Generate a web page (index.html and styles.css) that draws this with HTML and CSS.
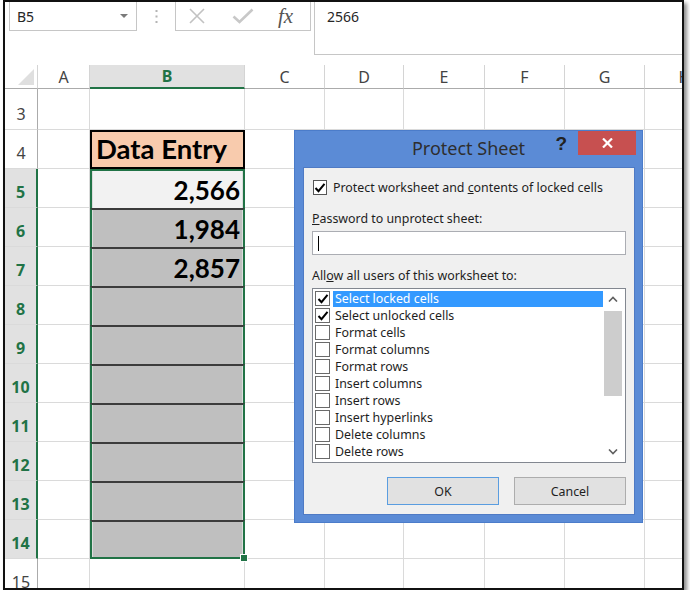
FILE: index.html
```html
<!DOCTYPE html>
<html lang="en">
<head>
    <meta charset="UTF-8">
    <title>Protect Sheet</title>
    <link rel="stylesheet" href="styles.css">
</head>
<body>
    <div class="frame">
        <div class="formula-bar">
            <div class="name-box">
                <span>B5</span>
                <svg class="dropdown" width="8" height="4" viewBox="0 0 8 4"><path d="M0 0h8L4 4z" fill="#7a7a7a"/></svg>
            </div>
            <div class="grip">
                <svg width="3" height="15" viewBox="0 0 3 15"><rect x="0.5" y="1" width="2" height="2" fill="#b4b4b4"/><rect x="0.5" y="6.5" width="2" height="2" fill="#b4b4b4"/><rect x="0.5" y="12" width="2" height="2" fill="#b4b4b4"/></svg>
            </div>
            <div class="fx-buttons">
                <svg width="18" height="16" viewBox="0 0 18 16"><path d="M2 1l14 14M16 1L2 15" stroke="#c2c2c2" stroke-width="1.6" fill="none"/></svg>
                <svg width="22" height="16" viewBox="0 0 22 16"><path d="M1.5 8.5l6 5.5L20.5 1.5" stroke="#c8c8c8" stroke-width="2.6" fill="none"/></svg>
                <span class="fx">fx</span>
            </div>
            <div class="formula-input">2566</div>
        </div>

        <div class="sheet">
            <div class="corner"><svg width="16" height="16" viewBox="0 0 16 16"><path d="M16 0v16H0z" fill="#dfdfdf"/></svg></div>
            <div class="ch">A</div>
            <div class="ch active">B</div>
            <div class="ch">C</div>
            <div class="ch">D</div>
            <div class="ch">E</div>
            <div class="ch">F</div>
            <div class="ch">G</div>
            <div class="ch">H</div>

            <div class="rh">3</div><div class="cell"></div><div class="cell"></div><div class="cell"></div><div class="cell"></div><div class="cell"></div><div class="cell"></div><div class="cell"></div><div class="cell"></div>
            <div class="rh">4</div><div class="cell"></div><div class="cell title">Data Entry</div><div class="cell"></div><div class="cell"></div><div class="cell"></div><div class="cell"></div><div class="cell"></div><div class="cell"></div>
            <div class="rh sel">5</div><div class="cell"></div><div class="cell b first">2,566</div><div class="cell"></div><div class="cell"></div><div class="cell"></div><div class="cell"></div><div class="cell"></div><div class="cell"></div>
            <div class="rh sel">6</div><div class="cell"></div><div class="cell b locked">1,984</div><div class="cell"></div><div class="cell"></div><div class="cell"></div><div class="cell"></div><div class="cell"></div><div class="cell"></div>
            <div class="rh sel">7</div><div class="cell"></div><div class="cell b locked">2,857</div><div class="cell"></div><div class="cell"></div><div class="cell"></div><div class="cell"></div><div class="cell"></div><div class="cell"></div>
            <div class="rh sel">8</div><div class="cell"></div><div class="cell b locked"></div><div class="cell"></div><div class="cell"></div><div class="cell"></div><div class="cell"></div><div class="cell"></div><div class="cell"></div>
            <div class="rh sel">9</div><div class="cell"></div><div class="cell b locked"></div><div class="cell"></div><div class="cell"></div><div class="cell"></div><div class="cell"></div><div class="cell"></div><div class="cell"></div>
            <div class="rh sel">10</div><div class="cell"></div><div class="cell b locked"></div><div class="cell"></div><div class="cell"></div><div class="cell"></div><div class="cell"></div><div class="cell"></div><div class="cell"></div>
            <div class="rh sel">11</div><div class="cell"></div><div class="cell b locked"></div><div class="cell"></div><div class="cell"></div><div class="cell"></div><div class="cell"></div><div class="cell"></div><div class="cell"></div>
            <div class="rh sel">12</div><div class="cell"></div><div class="cell b locked"></div><div class="cell"></div><div class="cell"></div><div class="cell"></div><div class="cell"></div><div class="cell"></div><div class="cell"></div>
            <div class="rh sel">13</div><div class="cell"></div><div class="cell b locked"></div><div class="cell"></div><div class="cell"></div><div class="cell"></div><div class="cell"></div><div class="cell"></div><div class="cell"></div>
            <div class="rh sel">14</div><div class="cell"></div><div class="cell b locked last"><span class="fill-handle"></span></div><div class="cell"></div><div class="cell"></div><div class="cell"></div><div class="cell"></div><div class="cell"></div><div class="cell"></div>
            <div class="rh">15</div><div class="cell"></div><div class="cell"></div><div class="cell"></div><div class="cell"></div><div class="cell"></div><div class="cell"></div><div class="cell"></div><div class="cell"></div>
        </div>

        <div class="dialog">
            <div class="dialog-title">
                <span></span>
                <span class="title-text">Protect Sheet</span>
                <div class="title-buttons">
                    <span class="help">?</span>
                    <span class="close"><svg width="11" height="10" viewBox="0 0 11 10"><path d="M1 0.5l9 9M10 0.5l-9 9" stroke="#fff" stroke-width="2.2" fill="none"/></svg></span>
                </div>
            </div>
            <div class="dialog-body">
                <div class="check-row">
                    <span class="box"><svg width="12" height="12" viewBox="0 0 12 12"><path d="M1.5 6l3 3.2L10.5 1.8" stroke="#000" stroke-width="2" fill="none"/></svg></span>
                    <span>Protect worksheet and <u>c</u>ontents of locked cells</span>
                </div>
                <div class="label"><u>P</u>assword to unprotect sheet:</div>
                <div class="password"><span class="caret"></span></div>
                <div class="label allow">All<u>o</u>w all users of this worksheet to:</div>
                <div class="listbox">
                    <div class="items">
                        <div class="item selected"><span class="box"><svg width="12" height="12" viewBox="0 0 12 12"><path d="M1.5 6l3 3.2L10.5 1.8" stroke="#000" stroke-width="2" fill="none"/></svg></span><span class="text">Select locked cells</span></div>
                        <div class="item"><span class="box"><svg width="12" height="12" viewBox="0 0 12 12"><path d="M1.5 6l3 3.2L10.5 1.8" stroke="#000" stroke-width="2" fill="none"/></svg></span><span class="text">Select unlocked cells</span></div>
                        <div class="item"><span class="box"></span><span class="text">Format cells</span></div>
                        <div class="item"><span class="box"></span><span class="text">Format columns</span></div>
                        <div class="item"><span class="box"></span><span class="text">Format rows</span></div>
                        <div class="item"><span class="box"></span><span class="text">Insert columns</span></div>
                        <div class="item"><span class="box"></span><span class="text">Insert rows</span></div>
                        <div class="item"><span class="box"></span><span class="text">Insert hyperlinks</span></div>
                        <div class="item"><span class="box"></span><span class="text">Delete columns</span></div>
                        <div class="item"><span class="box"></span><span class="text">Delete rows</span></div>
                    </div>
                    <div class="scrollbar">
                        <div class="arrow"><svg width="10" height="6" viewBox="0 0 10 6"><path d="M1 5.5L5 1.5l4 4" stroke="#606060" stroke-width="1.6" fill="none"/></svg></div>
                        <div class="track"><div class="thumb"></div></div>
                        <div class="arrow"><svg width="10" height="6" viewBox="0 0 10 6"><path d="M1 0.5l4 4 4-4" stroke="#606060" stroke-width="1.6" fill="none"/></svg></div>
                    </div>
                </div>
                <div class="buttons">
                    <button type="button" class="btn default">OK</button>
                    <button type="button" class="btn">Cancel</button>
                </div>
            </div>
        </div>
    </div>
</body>
</html>
```

FILE: styles.css
```css
body {
    margin: 0;
    background: #fff;
    font-family: "Noto Sans", "Open Sans", sans-serif;
}
.frame {
    position: relative;
    width: 677px;
    height: 586px;
    margin-left: 3px;
    border: 2px solid #111;
    box-shadow: 3px 3px 4px rgba(0, 0, 0, 0.45);
    overflow: hidden;
    background: #fff;
}

/* formula bar */
.formula-bar {
    display: flex;
    align-items: flex-start;
    height: 53px;
}
.name-box {
    box-sizing: border-box;
    display: flex;
    align-items: center;
    justify-content: space-between;
    width: 128px;
    height: 29px;
    margin-left: 4px;
    padding: 0 8px 0 7px;
    border: 1px solid #c6c6c6;
    border-top: none;
    font-size: 14px;
    color: #262626;
}
.grip {
    display: flex;
    align-items: center;
    justify-content: center;
    width: 38px;
    height: 29px;
}
.fx-buttons {
    box-sizing: border-box;
    display: flex;
    align-items: center;
    width: 136px;
    height: 29px;
    padding: 0 0 0 12px;
    gap: 26px;
    border: 1px solid #c6c6c6;
    border-top: none;
}
.fx {
    font-family: "Liberation Serif", serif;
    font-style: italic;
    font-size: 21px;
    color: #555;
    margin-left: -2px;
}
.formula-input {
    box-sizing: border-box;
    flex: 1;
    height: 53px;
    margin-left: 3px;
    padding: 5px 0 0 12px;
    border-left: 1px solid #c6c6c6;
    border-bottom: 1px solid #c6c6c6;
    font-size: 14px;
    color: #262626;
}

/* grid */
.sheet {
    display: grid;
    grid-template-columns: 33px 52px 155px 80px 79px 81px 80px 80px 80px;
    grid-template-rows: 24px 41px repeat(12, 39px);
    margin-top: 10px;
}
.sheet > div {
    box-sizing: border-box;
}
.corner {
    display: flex;
    align-items: flex-end;
    justify-content: flex-end;
    padding: 0 3px 3px 0;
    border-right: 1px solid #d4d4d4;
    border-bottom: 1px solid #ababab;
}
.ch {
    display: flex;
    align-items: center;
    justify-content: center;
    border-right: 1px solid #d4d4d4;
    border-bottom: 1px solid #ababab;
    font-size: 16px;
    color: #444;
}
.ch.active {
    background: #e1e1e1;
    border-bottom: 2px solid #217346;
    color: #217346;
    font-weight: bold;
}
.rh {
    display: flex;
    align-items: flex-end;
    justify-content: center;
    padding-bottom: 4px;
    border-right: 1px solid #ababab;
    border-bottom: 1px solid #dadada;
    font-size: 16px;
    color: #444;
}
.rh.sel {
    background: #e1e1e1;
    border-right: 2px solid #217346;
    color: #217346;
    font-weight: bold;
}
.cell {
    border-right: 1px solid #dadada;
    border-bottom: 1px solid #dadada;
}
.title {
    display: flex;
    align-items: flex-end;
    padding: 0 0 2px 4px;
    background: #f8cbad;
    border: 2px solid #000;
    font-family: Lato, "Open Sans", sans-serif;
    font-weight: bold;
    font-size: 27.5px;
    color: #000;
}
.b {
    position: relative;
    display: flex;
    align-items: flex-end;
    justify-content: flex-end;
    padding: 0 3px 2px 0;
    background: #bfbfbf;
    border-left: 2px solid #217346;
    border-right: 2px solid #217346;
    border-bottom: none;
    box-shadow: inset 1px 0 0 #dcdcdc, inset -1px 0 0 #dcdcdc;
    font-family: Lato, "Open Sans", sans-serif;
    font-weight: bold;
    font-size: 26px;
    color: #000;
}
.b.first {
    background: #f2f2f2;
    border-top: 2px solid #217346;
}
.b.locked {
    border-top: 2px solid #3c3c3c;
}
.b.last {
    border-bottom: 2px solid #217346;
}
.fill-handle {
    position: absolute;
    right: -5px;
    bottom: -5px;
    width: 6px;
    height: 6px;
    background: #217346;
    border: 1px solid #fff;
}

/* dialog */
.dialog {
    position: absolute;
    left: 289px;
    top: 128px;
    box-sizing: border-box;
    width: 349px;
    height: 393px;
    background: #5b8bd6;
    border: 1px solid #4b7cca;
    font-size: 12.4px;
    color: #1e1e1e;
}
.dialog-title {
    display: grid;
    grid-template-columns: 1fr auto 1fr;
    height: 36px;
}
.title-text {
    padding-top: 5px;
    font-size: 18px;
    color: #2e2e2e;
}
.title-buttons {
    display: flex;
    align-items: flex-start;
    justify-content: flex-end;
    gap: 11px;
    padding-right: 6px;
}
.help {
    margin-top: 2px;
    font-family: "Liberation Sans", sans-serif;
    font-weight: bold;
    font-size: 19px;
    color: #222;
}
.close {
    display: flex;
    align-items: center;
    justify-content: center;
    width: 58px;
    height: 24px;
    background: #c75050;
}
.dialog-body {
    box-sizing: border-box;
    height: 348px;
    margin: 0 7px 0 8px;
    padding: 11px 8px 0 8px;
    background: #f0f0f0;
    border: 1px solid #4f7ac4;
}
.check-row {
    display: flex;
    align-items: center;
    gap: 6px;
    padding-left: 1px;
}
.box {
    box-sizing: border-box;
    display: flex;
    align-items: center;
    justify-content: center;
    width: 14px;
    height: 15px;
    background: #fff;
    border: 1px solid #555;
}
.label {
    margin-top: 15px;
    line-height: 16px;
}
.password {
    box-sizing: border-box;
    height: 24px;
    margin-top: 4px;
    padding: 4px 0 0 5px;
    background: #fff;
    border: 1px solid #abadb3;
}
.caret {
    display: block;
    width: 1px;
    height: 15px;
    background: #000;
}
.label.allow {
    margin-top: 13px;
}
.listbox {
    box-sizing: border-box;
    display: flex;
    height: 175px;
    margin-top: 4px;
    background: #fff;
    border: 1px solid #828790;
}
.items {
    flex: 1;
    padding-top: 1px;
}
.item {
    display: flex;
    align-items: center;
    height: 17px;
    padding-left: 2px;
}
.item .box {
    width: 15px;
    border-color: #6a6a6a;
}
.item .text {
    flex: 1;
    margin-left: 3px;
    padding-left: 2px;
    line-height: 16px;
}
.item.selected .text {
    background: #3399ff;
    color: #fff;
}
.scrollbar {
    display: flex;
    flex-direction: column;
    width: 18px;
    margin: 0 3px 0 1px;
}
.arrow {
    display: flex;
    align-items: center;
    justify-content: center;
    height: 20px;
}
.track {
    flex: 1;
}
.thumb {
    height: 85px;
    margin-top: 2px;
    background: #cdcdcd;
}
.buttons {
    display: flex;
    justify-content: flex-end;
    gap: 15px;
    margin-top: 14px;
}
.btn {
    width: 112px;
    height: 28px;
    background: #e1e1e1;
    border: 1px solid #adadad;
    font-family: "Noto Sans", "Open Sans", sans-serif;
    font-size: 12.4px;
    color: #1e1e1e;
}
.btn.default {
    border-color: #5a9de0;
}
```
